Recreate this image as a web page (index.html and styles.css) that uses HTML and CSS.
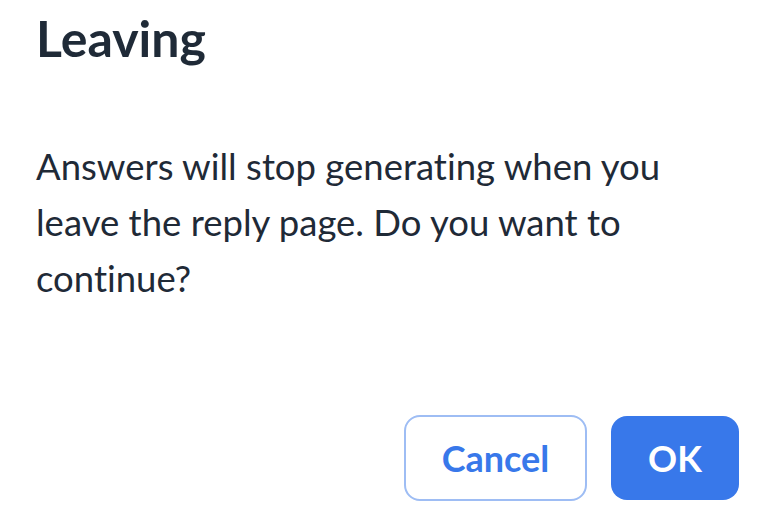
FILE: index.html
```html
<!DOCTYPE html>
<html>
<head>
  <meta charset="UTF-8" />
  <meta name="viewport" content="width=device-width, initial-scale=1.0" />
  <title>Leaving</title>
  <link rel="stylesheet" href="styles.css">
</head>
<body>

  <div class="dialog">
    <h1 class="dialog-title">Leaving</h1>
    <p class="dialog-text">Answers will stop generating when you leave the reply page. Do you want to continue?</p>
    <div class="dialog-actions">
      <button class="btn btn-cancel">Cancel</button>
      <button class="btn btn-ok">OK</button>
    </div>
  </div>

</body>
</html>
```

FILE: styles.css
```css
html, body {
  margin: 0;
  padding: 0;
  background: #ffffff;
}

body {
  font-family: "Lato", "Noto Sans", sans-serif;
  font-variant-ligatures: none;
  color: #1f2a37;
}

.dialog {
  box-sizing: border-box;
  height: 523px;
  padding: 8px 19px 22px 36px;
  display: flex;
  flex-direction: column;
}

.dialog-title {
  margin: 0;
  font-size: 50px;
  font-weight: 700;
  line-height: 60px;
}

.dialog-text {
  margin: 70px 0 0;
  max-width: 680px;
  font-size: 36.5px;
  line-height: 56px;
}

.dialog-actions {
  margin-top: auto;
  display: flex;
  justify-content: flex-end;
  align-items: center;
  gap: 24px;
}

.btn {
  font-family: inherit;
  font-size: 36px;
  font-weight: 700;
  height: 86px;
  border-radius: 16px;
  cursor: pointer;
}

.btn-cancel {
  width: 183px;
  background: #ffffff;
  color: #3878ea;
  border: 2px solid #9ebdf4;
}

.btn-ok {
  width: 128px;
  height: 84px;
  background: #3878ea;
  color: #ffffff;
  border: none;
}
```
